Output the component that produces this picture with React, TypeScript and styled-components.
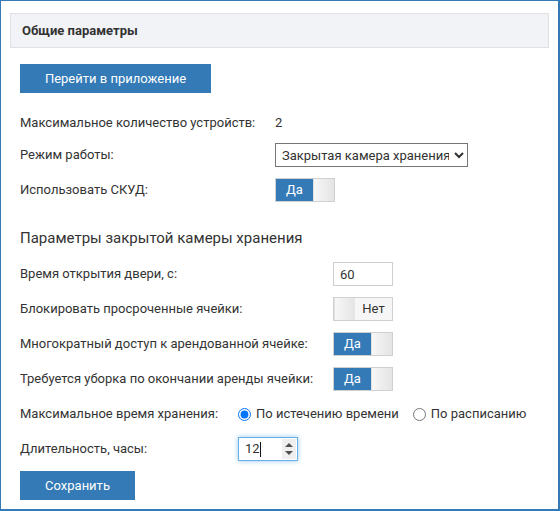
import React from 'react';
import styled, { createGlobalStyle } from 'styled-components';

const GlobalStyle = createGlobalStyle`
  html, body {
    margin: 0;
    padding: 0;
    background: #ffffff;
  }
  body {
    font-family: Roboto, "Liberation Sans", Arial, sans-serif;
    font-size: 13px;
    color: #333333;
  }
`;

const Frame = styled.div`
  box-sizing: border-box;
  width: 560px;
  height: 511px;
  border: 1px solid #337ab7;
  border-right-width: 2px;
  border-bottom-width: 2px;
  padding: 12px 10px 0 9px;
`;

const PanelHeader = styled.div`
  box-sizing: border-box;
  width: 539px;
  height: 35px;
  padding: 0 11px;
  display: flex;
  align-items: center;
  background: #f2f3f7;
  border: 1px solid #dfe1e5;
  font-size: 13px;
  font-weight: bold;
  color: #333333;
`;

const Body = styled.div`
  padding-left: 10px;
  display: flex;
  flex-direction: column;
  align-items: flex-start;
`;

const Button = styled.button<{ $width: number; $top: number }>`
  box-sizing: border-box;
  width: ${(p) => p.$width}px;
  height: 29px;
  margin-top: ${(p) => p.$top}px;
  border: none;
  border-radius: 0;
  background: #337ab7;
  color: #ffffff;
  font-family: Roboto, "Liberation Sans", Arial, sans-serif;
  font-size: 13px;
  font-weight: normal;
  cursor: pointer;
`;

const Row = styled.div<{ $label: number; $top: number }>`
  display: grid;
  grid-template-columns: ${(p) => p.$label}px auto;
  align-items: center;
  margin-top: ${(p) => p.$top}px;
  line-height: 18px;
`;

const Label = styled.span`
  color: #333333;
`;

const Value = styled.span`
  color: #333333;
`;

const SectionTitle = styled.h3`
  margin: 26px 0 0;
  font-size: 15px;
  font-weight: normal;
  line-height: 20px;
  color: #333333;
`;

const Select = styled.select`
  box-sizing: border-box;
  width: 193px;
  height: 24px;
  border: 1px solid #767676;
  border-radius: 0;
  background: #ffffff;
  font-family: Roboto, "Liberation Sans", Arial, sans-serif;
  font-size: 13px;
  color: #333333;
  padding: 0 2px;
`;

const TextInput = styled.input`
  box-sizing: border-box;
  width: 60px;
  height: 24px;
  border: 1px solid #cfcfcf;
  border-radius: 0;
  padding: 0 6px;
  font-family: Roboto, "Liberation Sans", Arial, sans-serif;
  font-size: 13px;
  color: #333333;
  outline: none;
`;

const Toggle = styled.div<{ $on: boolean }>`
  box-sizing: border-box;
  width: 60px;
  height: 24px;
  border: 1px solid #d0d0d0;
  display: flex;
  flex-direction: ${(p) => (p.$on ? 'row' : 'row-reverse')};
`;

const ToggleLabel = styled.span<{ $on: boolean }>`
  flex: 1;
  display: flex;
  align-items: center;
  justify-content: center;
  background: ${(p) => (p.$on ? '#337ab7' : '#f6f6f6')};
  color: ${(p) => (p.$on ? '#ffffff' : '#333333')};
  font-size: 13px;
  font-weight: normal;
`;

const ToggleKnob = styled.span`
  width: 20px;
  background: linear-gradient(to right, #f7f7f7, #e4e4e4);
  border-left: 1px solid #e0e0e0;
`;

const RadioGroup = styled.div`
  display: flex;
  align-items: center;
  gap: 14px;
`;

const RadioLabel = styled.label`
  display: flex;
  align-items: center;
  gap: 5px;
  color: #333333;
`;

const Radio = styled.input`
  width: 13px;
  height: 13px;
  margin: 0;
  accent-color: #0075ff;
`;

const NumberBox = styled.div`
  box-sizing: border-box;
  width: 60px;
  height: 24px;
  border: 1px solid #66afe9;
  box-shadow: 0 0 5px rgba(102, 175, 233, 0.7);
  display: flex;
  align-items: stretch;
  background: #ffffff;
`;

const NumberText = styled.span`
  flex: 1;
  display: flex;
  align-items: center;
  padding-left: 6px;
  font-size: 13px;
  color: #333333;
`;

const Caret = styled.span`
  width: 1px;
  height: 15px;
  background: #111111;
`;

const Spinner = styled.span`
  width: 14px;
  margin: 1px 1px 1px 0;
  background: #efefef;
  display: flex;
  flex-direction: column;
  align-items: center;
  justify-content: center;
  gap: 4px;
`;

const Arrow = styled.span<{ $up: boolean }>`
  width: 0;
  height: 0;
  border-left: 4px solid transparent;
  border-right: 4px solid transparent;
  ${(p) => (p.$up ? 'border-bottom: 4px solid #505050;' : 'border-top: 4px solid #505050;')}
`;

const Switch: React.FC<{ on: boolean }> = ({ on }) => (
  <Toggle $on={on}>
    <ToggleLabel $on={on}>{on ? 'Да' : 'Нет'}</ToggleLabel>
    <ToggleKnob />
  </Toggle>
);

const App: React.FC = () => (
  <>
    <GlobalStyle />
    <Frame>
      <PanelHeader>Общие параметры</PanelHeader>
      <Body>
        <Button $width={191} $top={16}>
          Перейти в приложение
        </Button>

        <Row $label={255} $top={21}>
          <Label>Максимальное количество устройств:</Label>
          <Value>2</Value>
        </Row>
        <Row $label={255} $top={11}>
          <Label>Режим работы:</Label>
          <Select defaultValue="closed">
            <option value="closed">Закрытая камера хранения</option>
            <option value="open">Открытая камера хранения</option>
          </Select>
        </Row>
        <Row $label={255} $top={11}>
          <Label>Использовать СКУД:</Label>
          <Switch on />
        </Row>

        <SectionTitle>Параметры закрытой камеры хранения</SectionTitle>

        <Row $label={313} $top={14}>
          <Label>Время открытия двери, с:</Label>
          <TextInput defaultValue="60" />
        </Row>
        <Row $label={313} $top={11}>
          <Label>Блокировать просроченные ячейки:</Label>
          <Switch on={false} />
        </Row>
        <Row $label={313} $top={11}>
          <Label>Многократный доступ к арендованной ячейке:</Label>
          <Switch on />
        </Row>
        <Row $label={313} $top={11}>
          <Label>Требуется уборка по окончании аренды ячейки:</Label>
          <Switch on />
        </Row>
        <Row $label={218} $top={14}>
          <Label>Максимальное время хранения:</Label>
          <RadioGroup>
            <RadioLabel>
              <Radio type="radio" name="storage" defaultChecked />
              По истечению времени
            </RadioLabel>
            <RadioLabel>
              <Radio type="radio" name="storage" />
              По расписанию
            </RadioLabel>
          </RadioGroup>
        </Row>
        <Row $label={218} $top={14}>
          <Label>Длительность, часы:</Label>
          <NumberBox>
            <NumberText>
              12
              <Caret />
            </NumberText>
            <Spinner>
              <Arrow $up />
              <Arrow $up={false} />
            </Spinner>
          </NumberBox>
        </Row>

        <Button $width={115} $top={10}>
          Сохранить
        </Button>
      </Body>
    </Frame>
  </>
);

export default App;
